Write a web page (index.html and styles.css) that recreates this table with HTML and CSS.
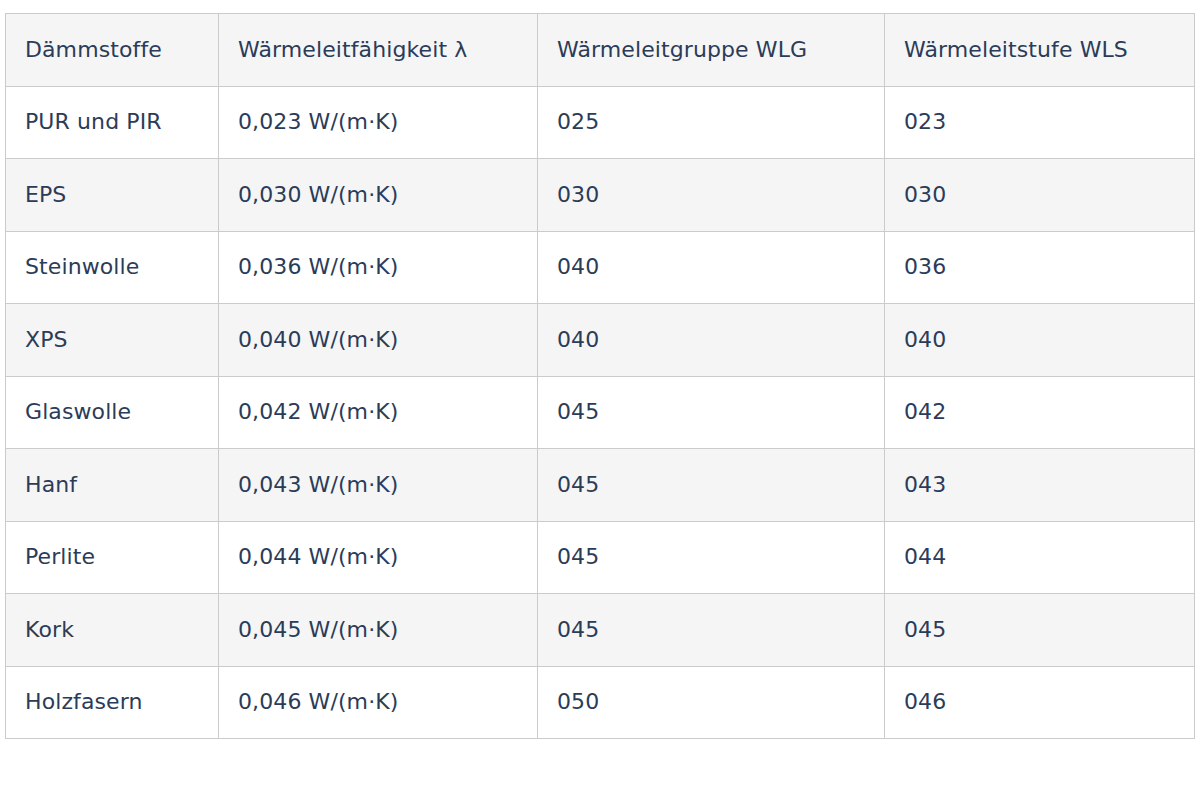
FILE: index.html
```html
<!DOCTYPE html>
<html lang="de">
<head>
<meta charset="utf-8">
<link rel="stylesheet" href="styles.css">
</head>
<body>
<div class="wrap">
<table class="tbl">
  <colgroup>
    <col class="c1"><col class="c2"><col class="c3"><col class="c4">
  </colgroup>
  <thead>
    <tr><th>Dämmstoffe</th><th>Wärmeleitfähigkeit λ</th><th>Wärmeleitgruppe WLG</th><th>Wärmeleitstufe WLS</th></tr>
  </thead>
  <tbody>
    <tr><td>PUR und PIR</td><td>0,023 W/(m·K)</td><td>025</td><td>023</td></tr>
    <tr><td>EPS</td><td>0,030 W/(m·K)</td><td>030</td><td>030</td></tr>
    <tr><td>Steinwolle</td><td>0,036 W/(m·K)</td><td>040</td><td>036</td></tr>
    <tr><td>XPS</td><td>0,040 W/(m·K)</td><td>040</td><td>040</td></tr>
    <tr><td>Glaswolle</td><td>0,042 W/(m·K)</td><td>045</td><td>042</td></tr>
    <tr><td>Hanf</td><td>0,043 W/(m·K)</td><td>045</td><td>043</td></tr>
    <tr><td>Perlite</td><td>0,044 W/(m·K)</td><td>045</td><td>044</td></tr>
    <tr><td>Kork</td><td>0,045 W/(m·K)</td><td>045</td><td>045</td></tr>
    <tr><td>Holzfasern</td><td>0,046 W/(m·K)</td><td>050</td><td>046</td></tr>
  </tbody>
</table>
</div>
</body>
</html>
```
FILE: styles.css
```css
html, body { margin: 0; padding: 0; background: #fff; }
.wrap { padding: 13px 6px 0 5px; }
.tbl {
  width: 1189px;
  border-collapse: collapse;
  table-layout: fixed;
  font-family: "DejaVu Sans", Inter, sans-serif;
  font-size: 22px;
  letter-spacing: 0.1px;
  color: #2b3c59;
}
.c1 { width: 213px; }
.c2 { width: 319px; }
.c3 { width: 347px; }
.c4 { width: 310px; }
.tbl th, .tbl td {
  border: 1px solid #cbcbcb;
  padding: 0 0 0 19px;
  height: 71.5px;
  line-height: 26px;
  text-align: left;
  font-weight: 400;
  white-space: nowrap;
}
.tbl thead tr { background: #f5f5f5; }
.tbl tbody tr:nth-child(even) { background: #f5f5f5; }
.tbl tbody tr:nth-child(odd) { background: #fff; }
```
